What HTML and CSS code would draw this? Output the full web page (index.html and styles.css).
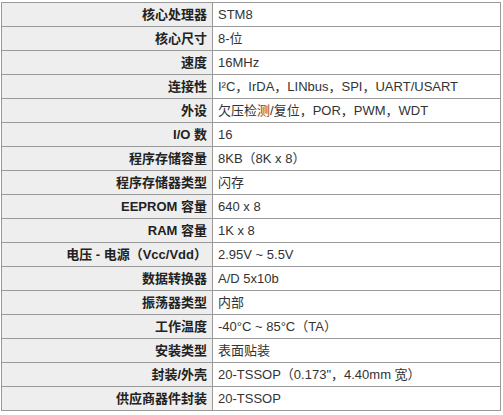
FILE: index.html
```html
<!DOCTYPE html>
<html>
<head>
<meta charset="utf-8">
<link rel="stylesheet" href="styles.css">
</head>
<body>
<table class="spec">
<tr><th>核心处理器</th><td>STM8</td></tr>
<tr><th>核心尺寸</th><td>8-位</td></tr>
<tr><th>速度</th><td>16MHz</td></tr>
<tr><th>连接性</th><td>I²C，IrDA，LINbus，SPI，UART/USART</td></tr>
<tr><th>外设</th><td>欠压检<span class="hl">测</span>/复位，POR，PWM，WDT</td></tr>
<tr><th>I/O 数</th><td>16</td></tr>
<tr><th>程序存储容量</th><td>8KB（8K x 8）</td></tr>
<tr><th>程序存储器类型</th><td>闪存</td></tr>
<tr><th>EEPROM 容量</th><td>640 x 8</td></tr>
<tr><th>RAM 容量</th><td>1K x 8</td></tr>
<tr><th>电压 - 电源（Vcc/Vdd）</th><td>2.95V ~ 5.5V</td></tr>
<tr><th>数据转换器</th><td>A/D 5x10b</td></tr>
<tr><th>振荡器类型</th><td>内部</td></tr>
<tr><th>工作温度</th><td>-40°C ~ 85°C（TA）</td></tr>
<tr><th>安装类型</th><td>表面贴装</td></tr>
<tr><th>封装/外壳</th><td>20-TSSOP（0.173"，4.40mm 宽）</td></tr>
<tr><th>供应商器件封装</th><td>20-TSSOP</td></tr>
</table>
</body>
</html>
```
FILE: styles.css
```css
html, body {
  margin: 0;
  padding: 0;
  background: #fff;
}
.spec {
  margin: 2px 0 0 1px;
  width: 500px;
  border-collapse: collapse;
  border: 1px solid #999;
  font-family: "Liberation Sans", "Noto Sans CJK SC", sans-serif;
  font-size: 13px;
  color: #333;
}
.spec th, .spec td {
  border: 1px solid #999;
  height: 24px;
  padding: 0 5px;
  box-sizing: border-box;
  line-height: 16px;
  vertical-align: middle;
}
.spec th {
  width: 211px;
  background: #eee;
  text-align: right;
  font-weight: bold;
  color: #222;
}
.spec td {
  text-align: left;
  font-weight: normal;
}
.hl {
  color: #8a3a22;
}
```
